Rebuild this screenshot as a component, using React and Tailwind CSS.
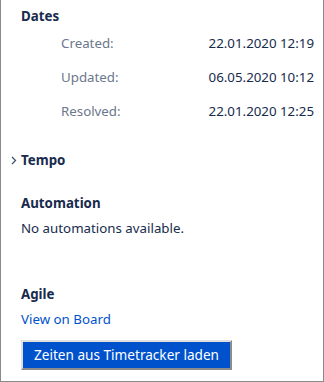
export default function App() {
  const rows = [
    ["Created:", "22.01.2020 12:19"],
    ["Updated:", "06.05.2020 10:12"],
    ["Resolved:", "22.01.2020 12:25"],
  ];
  return (
    <div
      className="w-[324px] h-[382px] bg-white border-x border-b border-[#8a8a8a] text-[13.3px] text-[#172b4d] overflow-hidden"
      style={{ fontFamily: '"Noto Sans", "Open Sans", sans-serif' }}
    >
      <div className="pl-[20px] pr-[9px]">
        <div className="font-bold leading-[20px] pt-[6px]">Dates</div>
        <div className="flex flex-col">
          {rows.map(([l, v]) => (
            <div key={l} className="flex justify-between items-center h-[34px] pl-[40px] first:mt-[1px]">
              <span className="text-[#6b778c]">{l}</span>
              <span>{v}</span>
            </div>
          ))}
        </div>
        <div className="relative font-bold leading-[20px] mt-[21px]">
          <svg className="absolute left-[-10px] top-[6px]" width="6" height="9" viewBox="0 0 6 9">
            <path d="M1 1 L4.5 4.5 L1 8" fill="none" stroke="#42526e" strokeWidth="1.3" />
          </svg>
          Tempo
        </div>
        <div className="font-bold leading-[20px] mt-[23px]">Automation</div>
        <div className="leading-[20px] mt-[5px]">No automations available.</div>
        <div className="font-bold leading-[20px] mt-[46px]">Agile</div>
        <div className="leading-[20px] mt-[5px] text-[#0052cc]">View on Board</div>
        <button className="mt-[11px] h-[30px] px-[11px] bg-[#0052cc] text-white text-[13.6px] leading-[20px] border-2 border-t-[#e0e0e0] border-l-[#e0e0e0] border-r-[#8c8c8c] border-b-[#8c8c8c]">
          Zeiten aus Timetracker laden
        </button>
      </div>
    </div>
  );
}
